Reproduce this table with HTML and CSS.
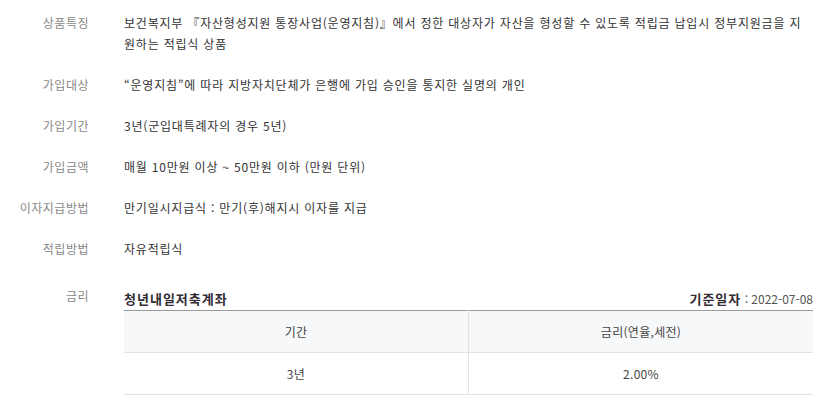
FILE: index.html
```html
<!DOCTYPE html>
<html lang="ko">
<head>
<meta charset="utf-8">
<title>상품안내</title>
<link rel="stylesheet" href="styles.css">
</head>
<body>
<div class="info">
  <div class="row">
    <div class="label">상품특징</div>
    <div class="value">보건복지부 『자산형성지원 통장사업(운영지침)』에서 정한 대상자가 자산을 형성할 수 있도록 적립금 납입시 정부지원금을 지원하는 적립식 상품</div>
  </div>
  <div class="row">
    <div class="label">가입대상</div>
    <div class="value">“운영지침”에 따라 지방자치단체가 은행에 가입 승인을 통지한 실명의 개인</div>
  </div>
  <div class="row">
    <div class="label">가입기간</div>
    <div class="value">3년(군입대특례자의 경우 5년)</div>
  </div>
  <div class="row">
    <div class="label">가입금액</div>
    <div class="value">매월 10만원 이상 ~ 50만원 이하 (만원 단위)</div>
  </div>
  <div class="row">
    <div class="label">이자지급방법</div>
    <div class="value">만기일시지급식 : 만기(후)해지시 이자를 지급</div>
  </div>
  <div class="row">
    <div class="label">적립방법</div>
    <div class="value">자유적립식</div>
  </div>
  <div class="row row-rate">
    <div class="label">금리</div>
    <div class="value">
      <div class="rate-head">
        <strong class="rate-title">청년내일저축계좌</strong>
        <span class="rate-date"><strong>기준일자</strong> : 2022-07-08</span>
      </div>
      <table class="rate-table">
        <thead>
          <tr><th>기간</th><th>금리(연율,세전)</th></tr>
        </thead>
        <tbody>
          <tr><td>3년</td><td>2.00%</td></tr>
        </tbody>
      </table>
    </div>
  </div>
</div>
</body>
</html>
```
FILE: styles.css
```css
html, body {
  margin: 0;
  padding: 0;
  background: #fff;
}
body {
  font-family: "Noto Sans CJK KR", "Noto Sans", sans-serif;
  font-size: 12px;
  color: #333;
}
.info {
  padding: 12px 9px 0 0;
  display: flex;
  flex-direction: column;
  gap: 20px;
}
.row {
  display: flex;
  line-height: 21px;
}
.label {
  width: 89px;
  flex-shrink: 0;
  text-align: right;
  color: #888;
  letter-spacing: 0.5px;
}
.value {
  flex: 1;
  margin-left: 35px;
  min-width: 0;
  letter-spacing: 0.8px;
}
.row-rate {
  margin-top: 6px;
}
.rate-head {
  display: flex;
  justify-content: space-between;
  align-items: flex-end;
  padding-top: 3px;
  margin-bottom: 1px;
  letter-spacing: 0;
}
.rate-title {
  font-size: 13px;
  font-weight: bold;
  color: #332b33;
  letter-spacing: 1px;
}
.rate-date {
  color: #555;
}
.rate-date strong {
  color: #332b33;
  font-size: 13px;
  letter-spacing: 1px;
}
.rate-table {
  width: 100%;
  border-collapse: collapse;
  border-top: 1px solid #999;
  table-layout: fixed;
  letter-spacing: 0.3px;
}
.rate-table th,
.rate-table td {
  height: 41px;
  padding: 0;
  text-align: center;
  font-weight: normal;
  color: #444;
  border-bottom: 1px solid #e2e2e2;
  border-left: 1px solid #e2e2e2;
}
.rate-table th:first-child,
.rate-table td:first-child {
  border-left: none;
}
.rate-table th {
  background: #f7f8fa;
}
```
